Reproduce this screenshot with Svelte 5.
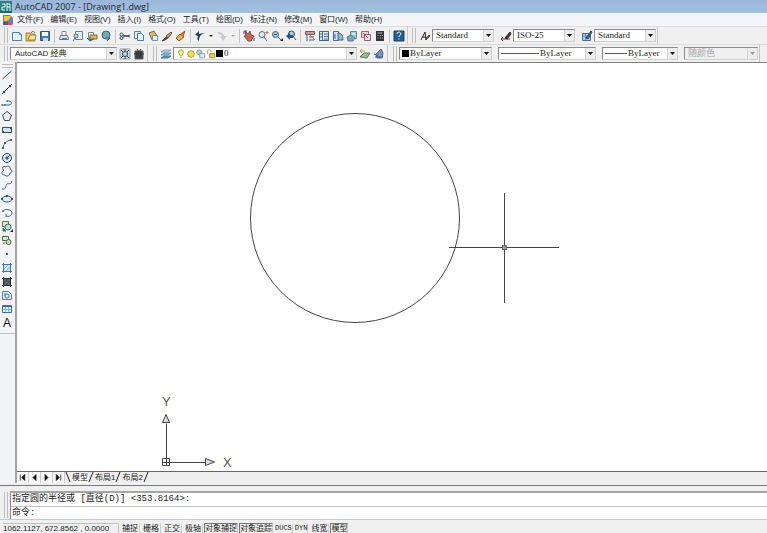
<script>
  const menus = [
    "文件(F)",
    "编辑(E)",
    "视图(V)",
    "插入(I)",
    "格式(O)",
    "工具(T)",
    "绘图(D)",
    "标注(N)",
    "修改(M)",
    "窗口(W)",
    "帮助(H)",
  ];

  // Each shape is [path, fill, stroke], on a 12 x 12 grid
  const icons = {
    app: [
      ["M0 0h12v12h-12z", "#2f7f80", "none"],
      ["M2 3h3v3h-3v3h3M7 2v8M7 3h3v3h-3M10 6v4", "none", "#e8f6f4"],
      ["M0 11h12", "none", "#1b4f60"],
    ],
    doc: [
      ["M1 1h7l3 3v6h-10z", "#5f83b4", "none"],
      ["M2 2l7 0l-3 5h-4z", "#f1c63b", "none"],
      ["M5 6l6 5h-7z", "#d8534f", "none"],
      ["M1 8h5v3h-5z", "#3f5f98", "none"],
    ],
    new: [
      ["M1.5 2.5h7l2 2v6h-9z", "#e6f1fa", "#4f83ad"],
      ["M8.5 2.5v2h2", "#fff", "#4f83ad"],
    ],
    open: [
      ["M1 3h4l1 1h4v7h-9z", "#efc45c", "#a8833b"],
      ["M3 10l2 -5h6l-1 5z", "#fbe6a5", "#9b7f45"],
      ["M6 3c1 -2 3 -2 4 0", "none", "#46704c"],
    ],
    save: [
      ["M1.5 1.5h9v9h-9z", "#477db7", "#285683"],
      ["M3 2h6v4h-6z", "#eef6ff", "none"],
      ["M4 8h5v3h-5z", "#cbd8e7", "none"],
    ],
    print: [
      ["M4 1.5h4v4h-4z", "#fff", "#7187a4"],
      ["M2.5 5.5h7l1 4h-9z", "#dce4ee", "#63799a"],
      ["M4 8.5h5", "none", "#527da6"],
    ],
    preview: [
      ["M3.5 1.5h7v8h-7z", "#edf5fc", "#5585b1"],
      ["M2 6a2 2 0 1 0 4 0a2 2 0 1 0 -4 0M3 8l-2 3", "#c8e0ef", "#53697d"],
    ],
    publish: [
      ["M2.5 2.5h5v5h-5z", "#fff", "#7585a0"],
      ["M4 5h7v4h-7z", "#dfb944", "#846d30"],
      ["M1 8l3 3l4 -2", "#3c77a9", "#315e89"],
    ],
    web: [
      ["M2 5a4 4 0 1 0 8 0a4 4 0 1 0 -8 0", "#70a8d5", "#3f6785"],
      ["M3 4l2 -2l2 2l-1 3z", "#71b27f", "none"],
      ["M6 8h4l-3 3", "#8a98a6", "#4f6072"],
    ],
    cut: [
      ["M4 5l7 2M4 7l7 -2", "none", "#354c62"],
      ["M1 4.5a1.5 1.5 0 1 0 3 0a1.5 1.5 0 1 0 -3 0M1 8a1.5 1.5 0 1 0 3 0a1.5 1.5 0 1 0 -3 0", "none", "#354c62"],
    ],
    copy: [
      ["M1.5 1.5h6v7h-6z", "#deedf8", "#5586b2"],
      ["M4.5 3.5h4l2 2v5h-6z", "#eff7ff", "#4b7ba7"],
    ],
    paste: [
      ["M2 3l5 -2l3 5l-5 4z", "#d9bb6c", "#7d6e50"],
      ["M5.5 5.5h5v5h-5z", "#f3f8fb", "#7591a8"],
    ],
    match: [
      ["M1 11l4 -4l2 1l-3 2z", "#4f4236", "#554739"],
      ["M5 6l5 -4l1 1l-4 5z", "#c9a062", "#6a5439"],
    ],
    brush: [
      ["M1 8l4 -4l4 3l-5 4z", "#e6b24e", "#8c5c24"],
      ["M6 4l4 -3l-2 5", "#e67a29", "#a74f2d"],
    ],
    undo: [["M1 5l4 -4v3c3 -1 5 -1 6 -1c-4 1 -6 3 -6 8c-2 -1 -2 -3 -1 -5z", "#203c63", "none"]],
    redo: [["M2 2c4 0 6 2 6 4h3l-4 5l-3 -5h2c0 -1 -2 -2 -4 -2z", "#c9cbce", "none"]],
    pan: [
      ["M2 1l3 3l2 -3l1 4l3 1l-3 5h-3l-4 -5l2 0z", "#c56957", "#864b4d"],
      ["M1 1v3M1 1h3M11 11v-3", "none", "#35577b"],
    ],
    zoomRt: [
      ["M2 4.5a3 3 0 1 0 6 0a3 3 0 1 0 -6 0M7 7l3 4", "#dcecf5", "#536e8a"],
      ["M8.5 2.5h3M10 1v3", "none", "#c07448"],
    ],
    zoomWin: [
      ["M1.5 4.5a3 3 0 1 0 6 0a3 3 0 1 0 -6 0M7 7l3 3", "#aac8df", "#425f80"],
      ["M3 4.5h3", "none", "#345b85"],
      ["M9 11h3v-3z", "#222", "none"],
    ],
    zoomPrev: [
      ["M3.5 4a3 3 0 1 0 6 0a3 3 0 1 0 -6 0M8 6l3 4", "#a9cbe0", "#354f70"],
      ["M1 6l4 -3v2h3v3h-3v2z", "#2b5278", "none"],
    ],
    props: [
      ["M1.5 1.5h9v3h-9z", "#c79aa0", "#84545d"],
      ["M3 11v-6M5 7h5M5 10h5", "none", "#405f7c"],
      ["M6 5l5 5", "none", "#c57340"],
    ],
    design: [
      ["M1.5 1.5h9v9h-9z", "#dcebf6", "#39668f"],
      ["M4.5 2v8M6 4h4M6 6.5h4M6 9h4M2 4h2M2 7h2", "none", "#456c90"],
    ],
    palette: [
      ["M1.5 1.5h5v9h-5z", "#d3e7f3", "#3c6f99"],
      ["M6 3c4 0 5 3 5 7h-5z", "#8eb7d4", "#3f6486"],
      ["M3 4v5", "none", "#3f6486"],
    ],
    sheet: [
      ["M4.5 1.5h6v7h-6z", "#a7cce2", "#6289a4"],
      ["M1 7l4 -2l4 3l-2 3h-5z", "#82a6b8", "#587e96"],
      ["M6 4h3", "none", "#fff"],
    ],
    markup: [
      ["M1.5 1.5h7v6h-7z", "#f1d0d5", "#b8616d"],
      ["M4.5 4.5h6v6h-6z", "#dfe8f2", "#a15d6e"],
      ["M3 3l5 5", "none", "#d14853"],
    ],
    calc: [
      ["M2 1h8v10h-8z", "#363636", "none"],
      ["M3.5 3h5M3.5 5.5h1M6 5.5h1M8 5.5h1M3.5 8h1M6 8h1M8 8h1", "none", "#b5b5b5"],
    ],
    help: [
      ["M1 1h10v10h-10z", "#285e91", "#1d4068"],
      ["M4 4c0 -3 4 -2 4 0c0 1 -2 1 -2 3M6 8.5v1", "none", "#fff"],
    ],
    textStyle: [
      ["M2 10l4 -8l1 8M3 7h4", "none", "#292929"],
      ["M6 9l4 -4l1 1l-4 4z", "#6d6962", "#4d4a45"],
    ],
    dimStyle: [
      ["M1 9h9M3 7l-2 2l2 2", "none", "#4b3c35"],
      ["M5 8l5 -6l1 2l-4 5z", "#4d332c", "#2e2623"],
    ],
    tableStyle: [
      ["M1.5 3.5h8v7h-8z", "#adcdeb", "#3f6d9c"],
      ["M2 6h7M4.5 4v6", "none", "#5f8fb9"],
      ["M5 8l5 -7l1 1l-4 7z", "#4c6680", "#31495f"],
    ],
    gear: [
      ["M1 1h10v10h-10z", "#cddae2", "#8b9dab"],
      ["M3.5 6a2.5 2.5 0 1 0 5 0a2.5 2.5 0 1 0 -5 0M2 2l2 2M10 2l-2 2M2 10l2 -2M10 10l-2 -2M6 1v2M6 9v2", "none", "#334453"],
    ],
    workspace: [
      ["M2 3h8v8h-8z", "#393d40", "#5b6266"],
      ["M4 1l2 3l2 -3M1 6h2M9 6h2", "none", "#34383b"],
    ],
    layers: [
      ["M1 4l3 -2h7l-3 2z", "#bdd3e3", "#8aa8bf"],
      ["M1 7l3 -2h7l-3 2z", "#8fb6d1", "#6c98b8"],
      ["M1 10l3 -2h7l-3 2z", "#5f96c3", "#4a7dab"],
    ],
    bulb: [
      ["M3 4a3 3 0 1 1 6 0l-2 4h-2z", "#f8ef78", "#a1983a"],
      ["M5 10h2", "none", "#72797e"],
    ],
    sun: [["M2 6a4 4 0 1 0 8 0a4 4 0 1 0 -8 0", "#f3df3b", "#9c982d"]],
    freeze: [
      ["M1 4a3 3 0 1 0 6 0a3 3 0 1 0 -6 0", "#b4d4ca", "#6e9688"],
      ["M4.5 5.5h6v5h-6z", "#e0edf4", "#7a97aa"],
    ],
    lock: [
      ["M2 6v-3c0 -3 4 -3 4 0v1", "none", "#a18f2b"],
      ["M4.5 5.5h6v5h-6z", "#e9d848", "#8d842b"],
    ],
    layerPrev: [
      ["M1 9l4 -4h6l-3 5z", "#9db893", "#5c7e68"],
      ["M1 3h5M3 1l-2 2l2 2", "none", "#bf9e31"],
    ],
    layerState: [
      ["M3 6l5 -5l2 4l-1 5h-5z", "#7896b9", "#45658c"],
      ["M1 6l4 2M2 9h8", "none", "#3b5e86"],
    ],
    line: [["M1.5 10l9 -8", "none", "#33475b"]],
    xline: [
      ["M1 11l10 -10", "none", "#2b3946"],
      ["M2 8h2v2h-2zM8 2h2v2h-2z", "#2b3946", "none"],
    ],
    pline: [["M1 9h7c3 0 3 -4 0 -4h-2M1 8v2M4 8v2M6 4v2", "none", "#35658d"]],
    polygon: [["M6 1.5l4.5 3.5l-2 5.5h-5l-2 -5.5z", "#e8eff2", "#3e4c55"]],
    rect: [
      ["M1.5 3.5h9v5h-9z", "#cfe4e6", "#37505f"],
      ["M1 7h2v2h-2zM9 3h2v2h-2z", "#37505f", "none"],
    ],
    arc: [
      ["M2 11c0 -5 3 -8 8 -9", "none", "#356088"],
      ["M1 9h2v2h-2zM9 1h2v2h-2zM3 4h2v2h-2z", "#356088", "none"],
    ],
    circle: [
      ["M1.5 6a4.5 4.5 0 1 0 9 0a4.5 4.5 0 1 0 -9 0", "#dceaf6", "#254769"],
      ["M6 6l3 -3M5 5h2v2h-2z", "#315f8d", "#315f8d"],
    ],
    cloud: [["M3 5c-3 -1 -1 -5 2 -3c2 -2 5 0 4 2c3 1 2 4 0 4c0 3 -4 4 -5 2c-4 0 -4 -3 -1 -5z", "#eef3f7", "#39536c"]],
    spline: [["M1 10c5 1 3 -4 5 -5c2 -1 4 1 5 -3", "none", "#4d5c69"]],
    ellipse: [
      ["M1.5 6a4.5 3 0 1 0 9 0a4.5 3 0 1 0 -9 0", "#e4f0f4", "#2d5870"],
      ["M5 2h2v2h-2zM0 5h2v2h-2zM10 5h2v2h-2z", "#2d5870", "none"],
    ],
    ellipseArc: [["M2 5c0 -4 9 -3 9 1c0 3 -4 4 -6 3M5 7v3M1 4h2", "none", "#35658a"]],
    insert: [
      ["M1.5 1.5h6v5h-6z", "#e6ecc1", "#62723e"],
      ["M4 7a3 3 0 1 0 6 0a3 3 0 1 0 -6 0", "#cadfcf", "#396c75"],
      ["M2 8l3 3l-3 0z", "#5b8b34", "#4f6f38"],
      ["M9 12h3v-3z", "#222", "none"],
    ],
    block: [
      ["M1.5 2.5h6v4h-6z", "#dce8c6", "#536840"],
      ["M5 8a2.5 2.5 0 1 0 5 0a2.5 2.5 0 1 0 -5 0", "#c8dfb0", "#41654c"],
      ["M2 9h2", "none", "#59734a"],
    ],
    point: [["M5 5h2v2h-2z", "#3b6180", "none"]],
    hatch: [
      ["M2.5 2.5h7v7h-7z", "#cfe4f5", "none"],
      ["M1 2.5h10M1 9.5h10M2.5 1v10M9.5 1v10", "none", "#3e76a8"],
      ["M3 7l4 -4M5 9l4 -4", "none", "#8fb8d8"],
    ],
    gradient: [
      ["M2.5 2.5h7v7h-7z", "#5d666c", "none"],
      ["M1 2.5h10M1 9.5h10M2.5 1v10M9.5 1v10", "none", "#282f35"],
      ["M3 7l4 -4M5 9l4 -4", "none", "#40484e"],
    ],
    region: [
      ["M1.5 2.5h6l3 3v5h-9z", "#dceaf4", "#4e82a9"],
      ["M4 7a2 2 0 1 0 4 0a2 2 0 1 0 -4 0M4 4v3", "#fff", "#42749a"],
    ],
    table: [
      ["M1.5 2.5h9v7h-9z", "#e6f1fa", "#3e71a2"],
      ["M2 3.5h8", "none", "#3e71a2"],
      ["M2 6.5h8M4.5 4v5M7.5 4v5", "none", "#8db3d4"],
    ],
    mtext: [],
  };

  const standardGroups = [
    [["new", "新建"], ["open", "打开"], ["save", "保存"]],
    [["print", "打印"], ["preview", "打印预览"], ["publish", "发布"], ["web", "三维 DWF"]],
    [["cut", "剪切"], ["copy", "复制"], ["paste", "粘贴"], ["match", "特性匹配"], ["brush", "块编辑器"]],
    [["undo", "放弃", true], ["redo", "重做", true]],
    [["pan", "实时平移"], ["zoomRt", "实时缩放"], ["zoomWin", "窗口缩放"], ["zoomPrev", "缩放上一个"]],
    [["props", "特性"], ["design", "设计中心"], ["palette", "工具选项板"], ["sheet", "图纸集管理器"], ["markup", "标记集管理器"], ["calc", "快速计算器"]],
    [["help", "帮助"]],
  ];

  const styles = [
    ["textStyle", "文字样式", "Standard"],
    ["dimStyle", "标注样式", "ISO-25"],
    ["tableStyle", "表格样式", "Standard"],
  ];

  const drawTools = [
    ["line", "直线"],
    ["xline", "构造线"],
    ["pline", "多段线"],
    ["polygon", "正多边形"],
    ["rect", "矩形"],
    ["arc", "圆弧"],
    ["circle", "圆"],
    ["cloud", "修订云线"],
    ["spline", "样条曲线"],
    ["ellipse", "椭圆"],
    ["ellipseArc", "椭圆弧"],
    ["insert", "插入块"],
    ["block", "创建块"],
    ["point", "点"],
    ["hatch", "图案填充"],
    ["gradient", "渐变色"],
    ["region", "面域"],
    ["table", "表格"],
    ["mtext", "多行文字"],
  ];

  const navs = [
    ["第一个", "M3 2v8M9 2v8l-4 -4z"],
    ["上一个", "M8 2v8l-4 -4z"],
    ["下一个", "M4 2v8l4 -4z"],
    ["最后一个", "M9 2v8M3 2v8l4 -4z"],
  ];

  const layouts = ["模型", "布局1", "布局2"];
  let layout = $state("模型");

  let modes = $state([
    { name: "捕捉", on: false },
    { name: "栅格", on: false },
    { name: "正交", on: false },
    { name: "极轴", on: false },
    { name: "对象捕捉", on: true },
    { name: "对象追踪", on: true },
    { name: "DUCS", on: false, latin: true },
    { name: "DYN", on: false, latin: true },
    { name: "线宽", on: false },
    { name: "模型", on: true },
  ]);

  let command = $state("");
</script>

{#snippet icon(name)}
  <svg class="icon" viewBox="0 0 12 12" aria-hidden="true">
    {#each icons[name] as [d, fill, stroke]}
      <path {d} {fill} {stroke} />
    {/each}
  </svg>
{/snippet}

{#snippet tool(name, label)}
  <button class="tool" aria-label={label} title={label}>
    {@render icon(name)}
  </button>
{/snippet}

{#snippet combo(label, value, kind, disabled = false)}
  <label class="combo {kind}" class:disabled>
    {#if kind === "layer"}
      {#each ["bulb", "sun", "freeze", "lock"] as name}
        {@render icon(name)}
      {/each}
    {/if}
    {#if kind === "layer" || kind === "color"}
      <span class="swatch"></span>
    {:else if kind === "linetype" || kind === "weight"}
      <span class="rule"></span>
    {/if}
    <select aria-label={label} {disabled}>
      <option>{value}</option>
    </select>
    <svg class="arrow" viewBox="0 0 9 11" aria-hidden="true">
      <path d="M2 4h5l-2.5 3z" />
    </svg>
  </label>
{/snippet}

<div class="app">
  <header class="title">
    {@render icon("app")}
    <h1>AutoCAD 2007 - [Drawing1.dwg]</h1>
  </header>

  <nav class="menu">
    {@render icon("doc")}
    {#each menus as menu}
      <button>{menu}</button>
    {/each}
  </nav>

  <div class="row">
    <div class="bar">
      {#each standardGroups as group}
        <div class="group">
          {#each group as [name, label, more]}
            {@render tool(name, label)}
            {#if more}
              <button class="more" aria-label="{label}列表" disabled={name === "redo"}>
                <svg viewBox="0 0 8 8" aria-hidden="true"><path d="M2 3h4l-2 2z" /></svg>
              </button>
            {/if}
          {/each}
        </div>
      {/each}
    </div>
    <div class="bar styles">
      {#each styles as [name, label, value]}
        <div class="pair">
          {@render tool(name, label)}
          {@render combo(label, value, "style")}
        </div>
      {/each}
    </div>
  </div>

  <div class="row">
    <div class="bar">
      {@render combo("工作空间", "AutoCAD 经典", "space")}
      <div class="pair after">
        {@render tool("gear", "工作空间设置")}
        {@render tool("workspace", "我的工作空间")}
      </div>
    </div>
    <div class="bar layers">
      {@render tool("layers", "图层特性管理器")}
      {@render combo("图层", "0", "layer")}
      <div class="pair after">
        {@render tool("layerPrev", "上一个图层")}
        {@render tool("layerState", "图层状态")}
      </div>
    </div>
    <div class="bar object">
      {@render combo("颜色", "ByLayer", "color")}
      {@render combo("线型", "ByLayer", "linetype")}
      {@render combo("线宽", "ByLayer", "weight")}
      {@render combo("打印样式", "随颜色", "plot", true)}
    </div>
  </div>

  <div class="work">
    <aside>
      <span class="grip"></span>
      <div class="draw">
        {#each drawTools as [name, label]}
          {#if name === "mtext"}
            <button class="tool letter" aria-label={label}>A</button>
          {:else}
            {@render tool(name, label)}
          {/if}
        {/each}
      </div>
    </aside>

    <main>
      <svg class="drawing" role="img" aria-label="图形">
        <circle cx="338" cy="155" r="104.5" />
        <g class="cursor">
          <path d="M432 184.5h110M487.5 130v110" />
          <rect x="485.5" y="182.5" width="4" height="4" />
        </g>
        <g class="ucs">
          <path d="M145.5 395.5h7v7h-7zM145.5 399.5h43M149.5 402.5v-42" />
          <path class="head" d="M188.5 395.5v7l9 -3.5zM145.5 359.5h7l-3.5 -8z" />
          <text x="206" y="404">X</text>
          <text x="145" y="343">Y</text>
        </g>
      </svg>

      <div class="tabs">
        <div class="navs">
          {#each navs as [label, d]}
            <button aria-label={label}>
              <svg viewBox="0 0 12 12" aria-hidden="true"><path {d} /></svg>
            </button>
          {/each}
        </div>
        <svg class="slant" viewBox="0 0 8 11" aria-hidden="true"><path d="M2 0l4 10" /></svg>
        {#each layouts as name}
          <button
            class="tab"
            class:active={layout === name}
            onclick={() => (layout = name)}>{name}</button
          >
          <svg class="slant" viewBox="0 0 8 11" aria-hidden="true"><path d="M2 10l4 -10" /></svg>
        {/each}
      </div>
    </main>
  </div>

  <section class="command">
    <span class="grip"></span>
    <div class="lines">
      <p>指定圆的半径或 [直径(D)] &lt;353.8164&gt;:</p>
      <label>命令: <input bind:value={command} /></label>
    </div>
  </section>

  <footer>
    <output>1062.1127, 672.8562 , 0.0000</output>
    {#each modes as mode}
      <button
        class:on={mode.on}
        class:latin={mode.latin}
        aria-pressed={mode.on}
        onclick={() => (mode.on = !mode.on)}>{mode.name}</button
      >
    {/each}
  </footer>
</div>

<style>
  :global(body) {
    background: #f0f0f0;
  }

  .app {
    display: flex;
    flex-direction: column;
    height: 100vh;
    overflow: hidden;
    background: #f0f0f0;
    color: #222;
    font-family: "Liberation Sans", "Noto Sans CJK SC", sans-serif;
    font-size: 8px;
  }

  button,
  input,
  select {
    margin: 0;
    padding: 0;
    border: 0;
    border-radius: 0;
    background: none;
    color: inherit;
    font: inherit;
  }

  svg {
    display: block;
    flex: none;
  }

  .icon {
    width: 12px;
    height: 12px;
  }

  .title {
    display: flex;
    align-items: center;
    gap: 3px;
    flex: none;
    height: 13px;
    background: linear-gradient(#9ab6d8, #a6c0df);
  }

  h1 {
    margin: 0;
    font: 9px/13px "Open Sans", "Noto Sans", sans-serif;
    color: #1c2733;
  }

  .menu {
    display: flex;
    align-items: center;
    gap: 7px;
    flex: none;
    height: 13px;
    padding-left: 2px;
    background: #f3f5f9;
  }

  .menu .icon {
    margin-right: -4px;
  }

  .menu button {
    line-height: 13px;
    white-space: nowrap;
  }

  .row {
    display: flex;
    flex: none;
    height: 17px;
    border-top: 1px solid #dcdcdc;
  }

  .bar {
    display: flex;
    align-items: center;
    padding: 0 1px;
    border-right: 1px solid #c8c8c8;
  }

  .bar::before {
    content: "";
    align-self: stretch;
    width: 2px;
    margin: 1px 2px 1px 3px;
    border-left: 1px solid #bcbcbc;
    border-right: 1px solid #bcbcbc;
  }

  .group,
  .pair {
    display: flex;
    align-items: center;
  }

  .group + .group {
    margin-left: 2px;
    padding-left: 2px;
    border-left: 1px solid #c4c4c4;
  }

  .tool {
    display: flex;
    align-items: center;
    justify-content: center;
    flex: none;
    width: 14px;
    height: 14px;
  }

  .tool:hover {
    background: #d5e3f2;
  }

  .more svg {
    width: 8px;
    height: 8px;
    fill: #222;
  }

  .more:disabled svg {
    fill: #aaa;
  }

  .styles .pair {
    margin-right: 5px;
  }

  .styles .pair:last-child {
    margin-right: 0;
  }

  .after {
    margin-left: 1px;
  }

  .layers,
  .object {
    margin-left: 1px;
  }

  .object {
    gap: 6px;
  }

  .object::before {
    margin-right: -4px;
  }

  .combo {
    display: flex;
    align-items: center;
    box-sizing: border-box;
    height: 13px;
    padding-left: 2px;
    border: 1px solid #8a8a8a;
    border-right-color: #d0d0d0;
    border-bottom-color: #d0d0d0;
    background: #fff;
    font-family: "Liberation Serif", "Noto Sans CJK SC", serif;
    font-size: 9px;
  }

  .combo select {
    flex: 1;
    min-width: 0;
    height: 11px;
    padding-left: 1px;
    appearance: none;
    line-height: 11px;
  }

  .combo .icon {
    width: 10px;
    height: 10px;
  }

  .arrow {
    width: 9px;
    height: 11px;
    margin-left: -9px;
    border-left: 1px solid #d4d4d4;
    background: #ededed;
    fill: #111;
    pointer-events: none;
  }

  .style {
    width: 62px;
  }

  .space {
    width: 107px;
    padding-left: 3px;
    font-size: 8px;
    font-family: "Liberation Sans", "Noto Sans CJK SC", sans-serif;
  }

  .layer {
    width: 184px;
  }

  .color {
    width: 93px;
  }

  .linetype {
    width: 98px;
  }

  .weight {
    width: 76px;
  }

  .plot {
    width: 74px;
  }

  .disabled {
    background: #f0f0f0;
    color: #888;
  }

  .disabled .arrow {
    fill: #999;
  }

  .swatch {
    width: 7px;
    height: 7px;
    background: #000;
  }

  .rule {
    width: 38px;
    height: 1px;
    background: #555;
  }

  .weight .rule {
    width: 22px;
  }

  .work {
    display: flex;
    flex: 1;
    min-height: 0;
  }

  aside {
    flex: none;
    width: 15px;
    background: #f2f4f6;
    border-right: 2px solid #a3a3a3;
  }

  aside .grip {
    display: block;
    height: 2px;
    margin: 2px 2px 0;
    border-top: 1px solid #bcbcbc;
    border-bottom: 1px solid #bcbcbc;
  }

  .draw {
    display: grid;
    grid-auto-rows: 1fr;
    height: 262px;
    padding-bottom: 3px;
    border-bottom: 1px solid #c4c4c4;
  }

  .draw .tool {
    height: 100%;
  }

  .letter {
    font-size: 12px;
    color: #111;
  }

  main {
    display: flex;
    flex: 1;
    flex-direction: column;
    min-width: 0;
    border-top: 1px solid #808080;
  }

  .drawing {
    flex: 1;
    width: 100%;
    min-height: 0;
    background: #fff;
    fill: none;
    stroke: #444;
  }

  .cursor rect {
    fill: #999;
    stroke: #666;
  }

  .ucs .head {
    fill: #ddd;
  }

  .ucs text {
    fill: #555;
    stroke: none;
    font: 13px "Liberation Sans", sans-serif;
  }

  .tabs {
    display: flex;
    flex: none;
    height: 11px;
    border-top: 1px solid #666;
    background: #eee;
  }

  .navs {
    display: flex;
    background: #f8f8f8;
  }

  .navs button {
    width: 12px;
    border-right: 1px solid #ccc;
    box-sizing: border-box;
  }

  .navs svg {
    width: 9px;
    height: 9px;
    margin: auto;
    fill: #111;
    stroke: #111;
  }

  .slant {
    width: 8px;
    height: 11px;
    margin-left: -1px;
    stroke: #222;
  }

  .tab {
    line-height: 11px;
    white-space: nowrap;
  }

  .tab.active {
    background: #fff;
  }

  .command {
    display: flex;
    flex: none;
    height: 28px;
    margin-top: 2px;
    padding-top: 5px;
    border-top: 1px solid #777;
    border-bottom: 1px solid #c8c8c8;
  }

  .command .grip {
    width: 2px;
    margin: 1px 2px 1px 4px;
    border-left: 1px solid #bcbcbc;
    border-right: 1px solid #bcbcbc;
  }

  .lines {
    flex: 1;
    border-top: 2px solid #a5a5a5;
    border-left: 1px solid #888;
    background: #fff;
    font: 9px/12px "Liberation Mono", "Noto Sans CJK SC", monospace;
  }

  .lines p,
  .lines label {
    display: flex;
    height: 14px;
    margin: 0;
    padding-left: 1px;
    box-sizing: border-box;
    white-space: pre;
  }

  .lines p {
    border-bottom: 1px solid #c4c4c4;
  }

  .lines label {
    height: 12px;
  }

  .lines input {
    flex: 1;
    min-width: 0;
    outline: none;
  }

  footer {
    display: flex;
    flex: none;
    gap: 2px;
    height: 10px;
    padding: 3px 0 0 3px;
  }

  footer output {
    width: 115px;
    border-top: 1px solid #c0c0c0;
    border-right: 1px solid #c0c0c0;
    line-height: 9px;
    white-space: nowrap;
  }

  footer button {
    padding: 0 1px;
    border-top: 1px solid transparent;
    border-right: 1px solid #ccc;
    line-height: 9px;
    white-space: nowrap;
  }

  footer .on {
    margin-left: -1px;
    padding: 0;
    border-top-color: #777;
    border-left: 1px solid #777;
  }

  footer .latin {
    padding: 0;
    font-family: "Liberation Mono", monospace;
    font-size: 7px;
  }
</style>
